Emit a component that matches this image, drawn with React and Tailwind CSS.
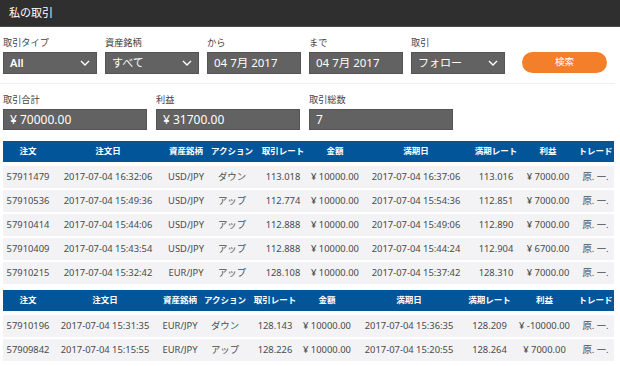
import React from "react";

const Chevron = () => (
  <svg width="10" height="6" viewBox="0 0 10 6" className="shrink-0">
    <path d="M1 1 L5 5 L9 1" fill="none" stroke="#fff" strokeWidth="1.4" />
  </svg>
);

const Select = ({ value, bold }) => (
  <div className="w-[94px] h-[22px] bg-[#626262] border border-[#545454] flex items-center justify-between pl-[6px] pr-[6px] text-white">
    <span className={bold ? "text-[11px] font-semibold" : "text-[11px]"}>{value}</span>
    <Chevron />
  </div>
);

const DateBox = ({ value }) => (
  <div className="w-[94px] h-[22px] bg-[#626262] border border-[#545454] flex items-center pl-[6px] text-white text-[11.5px]">
    {value}
  </div>
);

const Field = ({ label, children }) => (
  <div className="flex flex-col">
    <div className="text-[9.2px] leading-[12px] text-[#444] h-[15px]">{label}</div>
    {children}
  </div>
);

const Stat = ({ label, value }) => (
  <div className="flex flex-col">
    <div className="text-[9.2px] leading-[12px] text-[#444] h-[15px]">{label}</div>
    <div className="w-[144px] h-[21px] bg-[#626262] border border-[#545454] flex items-center pl-[6px] text-white text-[12px]">
      {value}
    </div>
  </div>
);

const headers = ["注文", "注文日", "資産銘柄", "アクション", "取引レート", "金額", "満期日", "満期レート", "利益", "トレード"];

const rows1 = [
  ["57911479", "2017-07-04 16:32:06", "USD/JPY", "ダウン", "113.018", "¥ 10000.00", "2017-07-04 16:37:06", "113.016", "¥ 7000.00", "原. 一."],
  ["57910536", "2017-07-04 15:49:36", "USD/JPY", "アップ", "112.774", "¥ 10000.00", "2017-07-04 15:54:36", "112.851", "¥ 7000.00", "原. 一."],
  ["57910414", "2017-07-04 15:44:06", "USD/JPY", "アップ", "112.888", "¥ 10000.00", "2017-07-04 15:49:06", "112.890", "¥ 7000.00", "原. 一."],
  ["57910409", "2017-07-04 15:43:54", "USD/JPY", "アップ", "112.888", "¥ 10000.00", "2017-07-04 15:44:24", "112.904", "¥ 6700.00", "原. 一."],
  ["57910215", "2017-07-04 15:32:42", "EUR/JPY", "アップ", "128.108", "¥ 10000.00", "2017-07-04 15:37:42", "128.310", "¥ 7000.00", "原. 一."],
];

const rows2 = [
  ["57910196", "2017-07-04 15:31:35", "EUR/JPY", "ダウン", "128.143", "¥ 10000.00", "2017-07-04 15:36:35", "128.209", "¥ -10000.00", "原. 一."],
  ["57909842", "2017-07-04 15:15:55", "EUR/JPY", "アップ", "128.226", "¥ 10000.00", "2017-07-04 15:20:55", "128.264", "¥ 7000.00", "原. 一."],
];

const cols1 = ["w-[50px]", "w-[110px]", "w-[46px]", "w-[46px]", "w-[56px]", "w-[48px]", "w-[114px]", "w-[46px]", "w-[58px]", "w-[37px]"];
const cols2 = ["w-[50px]", "w-[104px]", "w-[46px]", "w-[44px]", "w-[56px]", "w-[48px]", "w-[116px]", "w-[45px]", "w-[65px]", "w-[37px]"];

const Table = ({ cols, rows, className }) => (
  <table className={"w-[611px] table-fixed border-separate border-spacing-x-0 border-spacing-y-[2px] " + className}>
    <colgroup>
      {cols.map((c, i) => (
        <col key={i} className={c} />
      ))}
    </colgroup>
    <thead>
      <tr>
        {headers.map((h, i) => (
          <th
            key={i}
            className="h-[23px] p-0 bg-[#03559a] border-b-2 border-white text-white text-[8.5px] font-bold text-center whitespace-nowrap"
          >
            {h}
          </th>
        ))}
      </tr>
    </thead>
    <tbody>
      {rows.map((r, ri) => (
        <tr key={ri}>
          {r.map((c, ci) => (
            <td
              key={ci}
              className="h-[22px] p-0 bg-[#f3f3f5] text-[#4a4a4a] text-[9.4px] text-center whitespace-nowrap"
            >
              {c}
            </td>
          ))}
        </tr>
      ))}
    </tbody>
  </table>
);

export default function App() {
  return (
    <div
      className="w-[620px] h-[366px] bg-white overflow-hidden"
      style={{ fontFamily: '"Noto Sans", "Noto Sans CJK JP", sans-serif' }}
    >
      <div className="h-[27px] bg-[#2f2f2f] border-b border-[#4a4a4a] flex items-center pl-[9px] text-white text-[11px]">
        私の取引
      </div>

      <div className="pt-[10px] pl-[3px] flex items-end">
        <div className="flex gap-[8px]">
          <Field label="取引タイプ">
            <Select value="All" bold />
          </Field>
          <Field label="資産銘柄">
            <Select value="すべて" />
          </Field>
          <Field label="から">
            <DateBox value="04 7月 2017" />
          </Field>
          <Field label="まで">
            <DateBox value="04 7月 2017" />
          </Field>
          <Field label="取引">
            <Select value="フォロー" />
          </Field>
        </div>
        <button className="ml-[17px] w-[85px] h-[21px] mb-[1px] rounded-full bg-[#f47f2a] text-white text-[9.5px] flex items-center justify-center">
          検索
        </button>
      </div>

      <div className="mt-[9px] w-[615px] h-px bg-[#eeeeee]" />

      <div className="pt-[10px] pl-[3px] flex gap-[9px]">
        <Stat label="取引合計" value="¥ 70000.00" />
        <Stat label="利益" value="¥ 31700.00" />
        <Stat label="取引総数" value="7" />
      </div>

      <div className="pl-[3px] mt-[9px]">
        <Table cols={cols1} rows={rows1} className="" />
        <Table cols={cols2} rows={rows2} className="mt-[2px]" />
      </div>
    </div>
  );
}
